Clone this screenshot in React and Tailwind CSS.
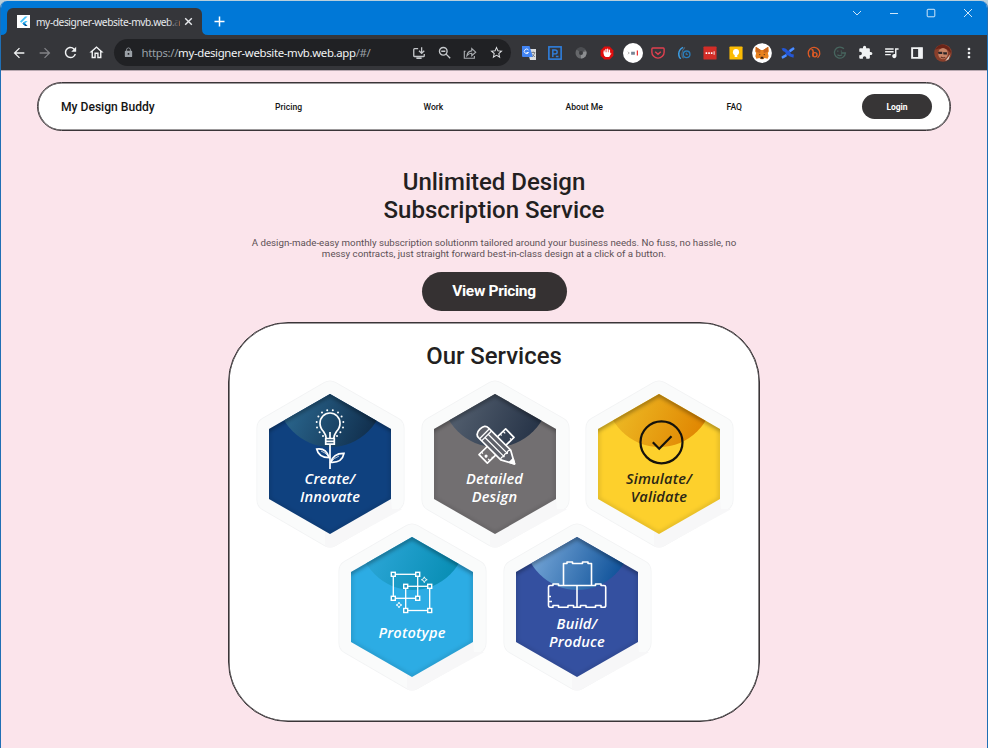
import React from "react";
import {
  MdArrowBack,
  MdArrowForward,
  MdRefresh,
  MdOutlineHome,
  MdLock,
  MdStarBorder,
  MdExtension,
  MdQueueMusic,
  MdMoreVert,
} from "react-icons/md";

const HEX = "75,16 136,51 136,121 75,156 14,121 14,51";

function Cell({ children, dim }) {
  return (
    <div className={"flex w-[25.9px] shrink-0 items-center justify-center " + (dim ? "text-[#828387]" : "text-[#f1f3f4]")}>
      {children}
    </div>
  );
}

function Svg({ size = 16, children }) {
  return (
    <svg width={size} height={size} viewBox="0 0 16 16" fill="none">
      {children}
    </svg>
  );
}

function TabStrip() {
  return (
    <div className="flex h-[34px] items-end bg-[#0078d7]">
      <div className="relative ml-[6px] flex h-[27px] w-[195px] items-center rounded-t-[6px] bg-[#35363a] pl-[10px]">
        <svg className="absolute bottom-0 -left-[6px]" width="6" height="6">
          <path d="M6 0V6H0Q6 6 6 0Z" fill="#35363a" />
        </svg>
        <svg className="absolute bottom-0 -right-[6px]" width="6" height="6">
          <path d="M0 0V6H6Q0 6 0 0Z" fill="#35363a" />
        </svg>
        <svg width="13" height="13" viewBox="0 0 13 13" className="shrink-0">
          <rect width="13" height="13" fill="#fff" />
          <path d="M8 1.5H10.6L4.3 7.8L3 6.5Z" fill="#47c5fb" />
          <path d="M8 6H10.6L8.2 8.6L6.9 7.2Z" fill="#47c5fb" />
          <path d="M5.5 8.6L6.9 7.2L10.6 11H8Z" fill="#01579b" />
          <path d="M5.5 8.6L6.9 7.2L8.2 8.6L6.9 9.9Z" fill="#0a9bea" />
        </svg>
        <div className="relative ml-[6px] w-[143px] font-['Noto_Sans',sans-serif] text-[10.2px] leading-[16px] tracking-[-0.42px] whitespace-nowrap text-[#e8eaed]">
          my-designer-website-mvb.web.a
          <div className="absolute inset-y-0 right-0 w-[12px] bg-linear-to-r from-transparent to-[#35363a]" />
        </div>
        <svg width="9" height="9" viewBox="0 0 9 9" className="ml-[5px] shrink-0" stroke="#e8eaed" strokeWidth="1.4">
          <path d="M1.2 1.2L7.8 7.8M7.8 1.2L1.2 7.8" />
        </svg>
      </div>
      <svg width="11" height="11" viewBox="0 0 11 11" className="mb-[8px] ml-[12px]" stroke="#fff" strokeWidth="1.5">
        <path d="M5.5 0.5V10.5M0.5 5.5H10.5" />
      </svg>
      <div className="mb-[17px] ml-auto flex">
        {["M1 3L5 7L9 3", "M1 5.5H9", "M2 1.3H8Q8.8 1.3 8.8 2V8Q8.8 8.8 8 8.8H2Q1.2 8.8 1.2 8V2Q1.2 1.3 2 1.3Z", "M1 1L9 9M9 1L1 9"].map((d) => (
          <div key={d} className="flex w-[37.2px] items-center justify-center">
            <svg width="10" height="10" viewBox="0 0 10 10" fill="none" stroke="#cfe6f8" strokeWidth="1">
              <path d={d} />
            </svg>
          </div>
        ))}
      </div>
    </div>
  );
}

function AddressBar() {
  return (
    <div className="ml-[4px] flex h-[27px] w-[397px] items-center rounded-full bg-[#202124]">
      <MdLock size={11} className="ml-[9px] text-[#9aa0a6]" />
      <div className="ml-[8px] w-[264px] font-['Noto_Sans',sans-serif] text-[11.4px] leading-[18px] tracking-[-0.34px] whitespace-nowrap text-[#9aa0a6]">
        https://<span className="text-[#f1f3f4]">my-designer-website-mvb.web.app</span>/#/
      </div>
      <div className="flex">
        <Cell>
          <Svg size={14}>
            <path d="M7 3H3Q2 3 2 4V11Q2 12 3 12H13Q14 12 14 11V9M5 14H11M11 1.5V8M8 5.5L11 8.5L14 5.5" stroke="#c4c7ca" strokeWidth="1.5" />
          </Svg>
        </Cell>
        <Cell>
          <Svg size={13}>
            <circle cx="6.500" cy="6.500" r="4.700" stroke="#c4c7ca" strokeWidth="1.700" />
            <path d="M10 10L15 15M4 6.500H9" stroke="#c4c7ca" strokeWidth="1.700" />
          </Svg>
        </Cell>
        <Cell>
          <Svg size={14}>
            <path d="M3 6H1.5V14H13V11.5M4.5 11Q5 6 10 5.5V3L14.5 7L10 11V8.3Q6.500 8.300 4.500 11Z" stroke="#a9acb0" strokeWidth="1.3" />
          </Svg>
        </Cell>
        <Cell>
          <MdStarBorder size={15} color="#dfe1e4" />
        </Cell>
      </div>
    </div>
  );
}

function Extensions() {
  return (
    <div className="ml-[5.5px] flex">
      <Cell>
        <Svg>
          <path d="M6 4H15V15H9Z" fill="#d9dcdf" />
          <path d="M1 1H8.500L12 12H2Q1 12 1 11Z" fill="#4285f4" />
          <path d="M7.500 5A2.300 2.300 0 1 0 7.600 7.500H5.500" stroke="#e6efff" strokeWidth="1" />
          <path d="M10.500 7.500H14M12.200 6.500V7.500M11.500 12L14 7.500M11.500 9.500L14 12" stroke="#6b7075" strokeWidth=".8" />
        </Svg>
      </Cell>
      <Cell>
        <Svg size={14}>
          <rect x="1" y="1" width="14" height="14" stroke="#2f80e0" strokeWidth="1.8" />
          <path d="M5.500 12.500V4.500H8Q10.500 4.500 10.500 6.800Q10.500 9 8 9H5.500M9 12H12" stroke="#2f80e0" strokeWidth="1.6" />
        </Svg>
      </Cell>
      <Cell>
        <Svg size={14}>
          <circle cx="8" cy="8" r="6.300" fill="#66686b" />
          <path d="M8 8L3 4A6.300 6.300 0 0 1 13 4Z" fill="#4c4e52" />
          <path d="M8 8L14 6A6.300 6.300 0 0 1 8 14.300Z" fill="#8c8e91" />
          <circle cx="8" cy="8" r="2.300" fill="#393a3e" />
        </Svg>
      </Cell>
      <Cell>
        <Svg size={14}>
          <path d="M5 .7H11L15.300 5V11L11 15.300H5L.7 11V5Z" fill="#e00d0d" />
          <path d="M4.800 8V5.500M6.800 8V3.900M8.800 8V3.600M10.800 8V4.600" stroke="#fff" strokeWidth="1.400" strokeLinecap="round" />
          <path d="M4.200 7H11.500V9L12.500 7.500L13 8.300L10.500 12.500H6.500Q4.200 11.500 4.200 9Z" fill="#fff" />
        </Svg>
      </Cell>
      <Cell>
        <Svg size={20}>
          <circle cx="8" cy="8" r="8" fill="#fff" />
          <path d="M4 7L5 8L4 9" stroke="#999" strokeWidth=".7" />
          <path d="M6.500 7H9.500V9.300H6.500Z" fill="#778595" />
          <path d="M11.500 6V10" stroke="#e33" strokeWidth="1" />
        </Svg>
      </Cell>
      <Cell>
        <Svg size={14}>
          <path d="M2 2.300H14Q15 2.300 15 3.300V7A7 6.800 0 0 1 1 7V3.300Q1 2.300 2 2.300Z" stroke="#e0404f" strokeWidth="1.600" />
          <path d="M4.800 6.500L8 9.500L11.200 6.500" stroke="#e0404f" strokeWidth="1.700" />
        </Svg>
      </Cell>
      <Cell>
        <Svg size={14}>
          <path d="M7 1.500Q2 4 2 9Q2 13 4.500 14.500" stroke="#3b9be0" strokeWidth="1.700" />
          <path d="M9 1.500Q5.500 5 5.500 9Q5.500 12 7.500 14" stroke="#52677a" strokeWidth="1.300" />
          <circle cx="11" cy="9.500" r="3.800" stroke="#2a7dbb" strokeWidth="1.500" />
          <path d="M11 7.500V10M9.500 9L12.500 10" stroke="#2a7dbb" />
        </Svg>
      </Cell>
      <Cell>
        <Svg size={14}>
          <rect x=".5" y=".5" width="15" height="15" rx="1" fill="#d32d27" />
          <path d="M3 8H4.800M6 8H7.800M9 8H10.800" stroke="#fff" strokeWidth="2" />
          <path d="M12.700 6V10" stroke="#fff" />
        </Svg>
      </Cell>
      <Cell>
        <Svg size={14}>
          <rect x=".5" y=".5" width="15" height="15" rx="1" fill="#fbbc04" />
          <circle cx="8" cy="7" r="3.500" fill="#fff" />
          <path d="M6.500 9H9.500V12.500H6.500Z" fill="#fff" />
        </Svg>
      </Cell>
      <Cell>
        <Svg size={20}>
          <circle cx="8" cy="8" r="7.900" fill="#fff" />
          <path d="M3 3L7 5.500H9L13 3L13.500 6.500L12.700 8L13.300 10.500L12.500 12.500L10 12L9 13H7L6 12L3.500 12.500L2.700 10.500L3.300 8L2.500 6.500Z" fill="#e8821e" />
          <path d="M3 3L7 5.500L6.500 8L3.300 7ZM13 3L9 5.500L9.500 8L12.700 7Z" fill="#c9651c" />
          <path d="M7 11H9L9.200 12.500H6.800ZM5.500 8.700L7 9.300L6 9.700ZM10.500 8.700L9 9.300L10 9.700Z" fill="#33231a" />
        </Svg>
      </Cell>
      <Cell>
        <Svg size={14}>
          <path d="M1.500 4.500Q4 3 7 7Q10 11 14.500 11.500" stroke="#2457d6" strokeWidth="3.600" />
          <path d="M14.500 2.500Q11 4 8 8Q5 12 1.500 13" stroke="#2457d6" strokeWidth="3" />
          <path d="M10 6L15 2.500M1 13.500L6 10.500" stroke="#4d91ff" strokeWidth="2.600" />
        </Svg>
      </Cell>
      <Cell>
        <Svg size={14}>
          <path d="M3.500 13A6.600 6.600 0 1 1 12 13.500" stroke="#dd5a25" strokeWidth="1.500" />
          <path d="M5 4Q7 4 7 6V12" stroke="#dd5a25" strokeWidth="1.700" />
          <circle cx="9" cy="10" r="2.400" stroke="#dd5a25" strokeWidth="1.600" />
        </Svg>
      </Cell>
      <Cell>
        <Svg size={14}>
          <path d="M12.500 3.200A6.300 6.300 0 1 0 14.200 8H9" stroke="#47655e" strokeWidth="1.500" />
          <path d="M5.500 5V6.500M9.500 5V6.500M5 10Q7.500 12 10.500 10" stroke="#47655e" strokeWidth="1.300" />
        </Svg>
      </Cell>
      <Cell>
        <MdExtension size={15} />
      </Cell>
      <Cell>
        <MdQueueMusic size={17} />
      </Cell>
      <Cell>
        <Svg size={12}>
          <path d="M1.500 1.500H14.500V14.500H1.500Z" stroke="#f1f3f4" strokeWidth="2.600" />
          <path d="M9.500 1H15V15H9.500Z" fill="#f1f3f4" />
        </Svg>
      </Cell>
      <Cell>
        <Svg size={18}>
          <circle cx="8" cy="8" r="7.800" fill="#8a3f2b" />
          <path d="M1 5Q5 -1 10 1Q15 3 15 8L12 5L4 4Z" fill="#6b2418" />
          <ellipse cx="8" cy="8.500" rx="4.300" ry="5" fill="#c78467" />
          <path d="M3.500 6.800H7.300V8.800H4ZM8 7.300H11.500V9.300H8.500Z" fill="#2c2427" />
          <path d="M10 15L14.500 9L13 13.500Z" fill="#d9d2ca" />
          <path d="M6 11.500Q8 13 10 11.800" stroke="#6d3325" />
        </Svg>
      </Cell>
      <Cell>
        <MdMoreVert size={16} />
      </Cell>
    </div>
  );
}

function Toolbar() {
  return (
    <div className="flex h-[36px] items-center border-b border-[#b9a9b1] bg-[#35363a] pl-[5px]">
      <Cell>
        <MdArrowBack size={16} />
      </Cell>
      <Cell dim>
        <MdArrowForward size={16} />
      </Cell>
      <Cell>
        <MdRefresh size={17} />
      </Cell>
      <Cell>
        <MdOutlineHome size={17} />
      </Cell>
      <AddressBar />
      <Extensions />
    </div>
  );
}

function SiteNav() {
  return (
    <nav className="mx-auto mt-[11px] flex h-[49px] w-[914px] items-center rounded-full border border-[#3a3538] bg-white pr-[18px] pl-[23px] text-[8.6px] font-medium text-[#141414] shadow-[inset_0_0_0_0.6px_#3a3538]">
      <div className="w-[214px] pt-[2px] text-[12.1px]">My Design Buddy</div>
      <div className="w-[148.500px] pt-px">Pricing</div>
      <div className="w-[142px] pt-px">Work</div>
      <div className="w-[161px] pt-px">About Me</div>
      <div className="pt-px">FAQ</div>
      <button className="ml-auto h-[25px] w-[70px] rounded-full bg-[#373536] pt-px text-[8.500px] font-bold tracking-[-0.1px] text-white">
        Login
      </button>
    </nav>
  );
}

function Hero() {
  return (
    <section className="mt-[37px] flex flex-col items-center text-center">
      <h1 className="text-[24px] leading-[28px] font-medium text-[#231f21]">
        Unlimited Design
        <br />
        Subscription Service
      </h1>
      <p className="mt-[13px] text-[9.720px] leading-[11px] whitespace-nowrap text-[#5c5055]">
        A design-made-easy monthly subscription solutionm tailored around your business needs. No fuss, no hassle, no
        <br />
        messy contracts, just straight forward best-in-class design at a click of a button.
      </p>
      <button className="mt-[13px] h-[39px] w-[145px] rounded-full bg-[#353132] text-[15.500px] font-bold tracking-[-0.32px] text-white">
        View Pricing
      </button>
    </section>
  );
}

function HexCard({ id, fill, from, to, ink = "#fff", textTop, lines, children }) {
  return (
    <div className="relative h-[172px] w-[150px]">
      <svg className="absolute inset-0 overflow-visible" width="150" height="172" viewBox="0 0 150 172" fill="none">
        <defs>
          <linearGradient id={id + "-cap"} x1="0.1" y1="0.4" x2="1" y2="0.8">
            <stop offset=".15" stopColor={from} />
            <stop offset=".95" stopColor={to} />
          </linearGradient>
          <clipPath id={id + "-clip"}>
            <polygon points={HEX} />
          </clipPath>
          <filter id={id + "-soft"} x="-20%" y="-20%" width="140%" height="140%">
            <feGaussianBlur stdDeviation="2" />
          </filter>
        </defs>
        <polygon points="75,14 138,50 138,122 75,158 13,122 13,50" fill="#f2f3f4" stroke="#f2f3f4" strokeWidth="23" strokeLinejoin="round" />
        <polygon points="75,14 138,50 138,122 75,158 13,122 13,50" fill="#fafbfb" stroke="#fafbfb" strokeWidth="21.500" strokeLinejoin="round" />
        <path d="M70 153L75 156L136 121L137 131H147Q146 132 142 134L80 168Q75 171 70 168Z" fill="#f7f7f8" />
        <polygon points={HEX} fill={fill} />
        <g clipPath={"url(#" + id + "-clip)"}>
          <circle cx="75.500" cy="15.500" r="53.500" fill={"url(#" + id + "-cap)"} />
          <polygon points={HEX} stroke="#000" strokeOpacity=".18" strokeWidth="2.500" filter={"url(#" + id + "-soft)"} />
          <path d="M10 53L75 16L140 53" stroke="#000" strokeOpacity=".3" strokeWidth="4" filter={"url(#" + id + "-soft)"} />
        </g>
        <g stroke={ink}>{children}</g>
      </svg>
      <div
        className="relative text-center font-['Open_Sans',sans-serif] text-[14.600px] leading-[18px] font-semibold tracking-[0.18px] italic"
        style={{ paddingTop: textTop, color: ink }}
      >
        {lines.map((l) => (
          <div key={l}>{l}</div>
        ))}
      </div>
    </div>
  );
}

function BulbIcon() {
  const dots = [[72.200, 32.200], [67, 34.500], [63.400, 38.600], [61.700, 44], [62, 49.400], [64.600, 54.300], [68, 58]];
  return (
    <g strokeWidth="1.700">
      <path d="M71.200 60.300Q71 57 68.500 53.500Q65 50 65 45.300A10 10.300 0 0 1 85 45.300Q85 50 81.500 53.500Q79 57 78.800 60.300" />
      <path d="M70.700 60.500H79.300V66.200H70.700ZM71 63.300H79M75 54V60M75 66V91" />
      <path d="M61.700 71Q71 69.500 74.300 79.700Q63.500 79.500 61.700 71ZM89 75.300Q78.500 75 75.700 84.300Q87 85 89 75.300Z" />
      <path d="M66 73Q70 74 74 79M84 78Q79 80 76 84" strokeWidth=".7" />
      {dots.map(([x, y]) => (
        <g key={y} fill="#fff" stroke="none">
          <circle cx={x} cy={y} r="1" />
          <circle cx={150 - x} cy={y} r="1" />
        </g>
      ))}
    </g>
  );
}

function DraftIcon() {
  return (
    <g strokeWidth="1.700" strokeLinejoin="round">
      <g transform="translate(76.500 68) rotate(-44)">
        <rect x="-18.500" y="-6" width="37" height="12" />
        <path d="M-15 6V3.500M-11 6V4.500M11 -6V-4M15 -6V-3M15 6V4M-15 -6V-4" strokeWidth="1.200" />
        <circle cx="-14.500" cy="0" r=".7" />
      </g>
      <g transform="translate(77.200 68.500) rotate(45)">
        <path d="M-19 -7H12L24.500 0L12 7H-19Q-24.500 7 -24.500 0Q-24.500 -7 -19 -7Z" fill="#5d6069" />
        <path d="M-18 -7V7M-15 -7V7M-15 -2.300H12M-15 2.300H12M12 -7Q9.500 -4.500 12 -2.300Q9.500 0 12 2.300Q9.500 4.500 12 7" strokeWidth="1.300" />
        <path d="M20 -2.500V2.500L24.500 0Z" fill="#fff" />
      </g>
    </g>
  );
}

function PrototypeIcon() {
  const handles = [[56.300, 53.300], [80.700, 53.300], [56.300, 77.300], [80.700, 77.300], [68.700, 65.300], [92.700, 65.300], [68.700, 89.500], [92.700, 89.500]];
  return (
    <g strokeWidth="1.300">
      <rect x="56.300" y="53.300" width="24.400" height="24" />
      <rect x="68.700" y="65.300" width="24" height="24.200" />
      {handles.map(([x, y]) => (
        <rect key={x + "-" + y} x={x - 2} y={y - 2} width="4" height="4" fill="#2599c5" strokeWidth="1.400" />
      ))}
      <path d="M87.300 55.800L88.200 57.800L90.200 58.700L88.200 59.600L87.300 61.600L86.400 59.600L84.400 58.700L86.400 57.800ZM62 81.100L62.900 83.100L64.900 84L62.900 84.900L62 86.900L61.100 84.900L59.100 84L61.100 83.100Z" strokeWidth=".9" />
    </g>
  );
}

function BricksIcon() {
  return (
    <g strokeWidth="1.600" strokeLinejoin="round">
      <path d="M61.500 64.500V42.500H65V41H70.500V42.500H80.500V41H86V42.500H89.500V64.500" />
      <path d="M75 64.500V86.300H71.500V84.500H66V86.300H56.500V84.500H51V86.300H48Q46.500 86 46.500 84.500V80.500H50M46.500 80.500V75.500H49M46.500 75.500V66Q46.500 64.500 48 64.500H51V63H56.500V64.500H93.500V63H99V64.500H102Q103.700 64.500 103.700 66V84.500Q103.700 86.300 102 86.300H99V84.500H93.500V86.300H84V84.500H78.500V86.300H75" />
    </g>
  );
}

function Services() {
  return (
    <section className="mx-auto mt-[11px] flex h-[400px] w-[532px] flex-col items-center rounded-[60px] border border-[#3a3538] bg-white pt-[19px] shadow-[inset_0_0_0_0.6px_#3a3538]">
      <h2 className="text-[23.900px] leading-[28px] font-medium text-[#231f21]">Our Services</h2>
      <div className="mt-[8px] flex gap-[14.500px] pl-px">
        <HexCard id="create" fill="#0f417f" from="#286289" to="#102d4b" textTop={91} lines={["Create/", "Innovate"]}>
          <BulbIcon />
        </HexCard>
        <HexCard id="detail" fill="#726f71" from="#505c6c" to="#253246" textTop={91} lines={["Detailed", "Design"]}>
          <DraftIcon />
        </HexCard>
        <HexCard id="simulate" fill="#fdd02c" from="#ecb622" to="#e08400" ink="#2b2615" textTop={91} lines={["Simulate/", "Validate"]}>
          <g stroke="#15120c" strokeWidth="2.200">
            <circle cx="77.500" cy="64.300" r="21" />
            <path d="M68.800 64.300L75.200 70.700L87.500 58.300" />
          </g>
        </HexCard>
      </div>
      <div className="-mt-[29px] flex gap-[15px] pl-px">
        <HexCard id="proto" fill="#2cace4" from="#29a4d4" to="#078db3" textTop={102} lines={["Prototype"]}>
          <PrototypeIcon />
        </HexCard>
        <HexCard id="build" fill="#3450a0" from="#6d9fd2" to="#0d5098" textTop={93} lines={["Build/", "Produce"]}>
          <BricksIcon />
        </HexCard>
      </div>
    </section>
  );
}

export default function App() {
  return (
    <div className="h-[748px] w-[988px] overflow-hidden bg-[#b8cfdc] pt-px font-[Roboto,sans-serif]">
      <div className="h-[747px] overflow-hidden rounded-t-[7px] border-x border-[#1f6fb5] bg-[#fbe4eb]">
        <TabStrip />
        <Toolbar />
        <SiteNav />
        <Hero />
        <Services />
      </div>
    </div>
  );
}
